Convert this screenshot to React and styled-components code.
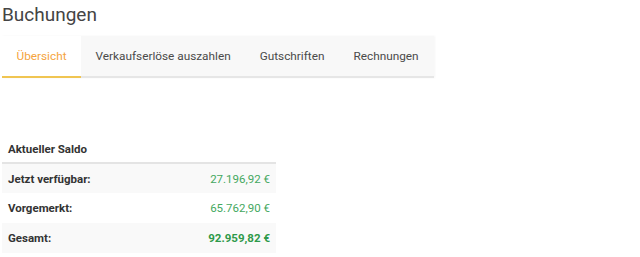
import { styled, createGlobalStyle } from 'styled-components';

const GlobalStyle = createGlobalStyle`
	body {
		margin: 0;
		background: #fff;
		font-family: Roboto, 'Liberation Sans', sans-serif;
	}
`;

const tabs = ['Übersicht', 'Verkaufserlöse auszahlen', 'Gutschriften', 'Rechnungen'];

const rows = [
	{ label: 'Jetzt verfügbar:', value: '27.196,92 €' },
	{ label: 'Vorgemerkt:', value: '65.762,90 €' },
	{ label: 'Gesamt:', value: '92.959,82 €', total: true },
];

function App() {
	return (
		<Page>
			<GlobalStyle />
			<Title>Buchungen</Title>
			<TabBar>
				{tabs.map((tab, i) => (
					<Tab key={tab} data-active={i === 0}>
						{tab}
					</Tab>
				))}
			</TabBar>
			<Table>
				<thead>
					<tr>
						<HeadCell colSpan={2}>Aktueller Saldo</HeadCell>
					</tr>
				</thead>
				<tbody>
					{rows.map((row, i) => (
						<Row key={row.label} $striped={i % 2 === 0}>
							<Label>{row.label}</Label>
							<Value $total={row.total}>{row.value}</Value>
						</Row>
					))}
				</tbody>
			</Table>
		</Page>
	);
}

export default App;

const Page = styled.div`
	padding: 0 2px;
`;

const Title = styled.h1`
	margin: 0;
	padding-top: 3px;
	height: 33px;
	color: #444;
	font-size: 19px;
	font-weight: 400;
	line-height: 24px;
`;

const TabBar = styled.div`
	display: flex;
	width: fit-content;
	padding-right: 1px;
	background: #f8f8f8;
	border-bottom: 2px solid #e6e6e6;
	box-shadow: 1px 0 2px rgba(0, 0, 0, 0.04);
`;

const Tab = styled.div`
	padding: 0 14.5px;
	height: 40px;
	display: flex;
	align-items: center;
	white-space: nowrap;
	color: #4a4a4a;
	font-size: 11.8px;
	margin-bottom: -2px;
	border-bottom: 2px solid transparent;

	&[data-active='true'] {
		background: #fff;
		color: #f5a440;
		border-bottom-color: #f0c552;
	}
`;

const Table = styled.table`
	margin-top: 57px;
	width: 274px;
	border-collapse: collapse;
	font-size: 11.5px;
	color: #333;
`;

const HeadCell = styled.th`
	text-align: left;
	font-weight: 700;
	padding: 0 6px;
	height: 27px;
	border-bottom: 2px solid #e4e4e4;
`;

const Row = styled.tr`
	background: ${(p) => (p.$striped ? '#f9f9f9' : '#fff')};
	height: 30px;
`;

const Label = styled.td`
	padding: 0 6px;
	font-weight: 700;
`;

const Value = styled.td`
	padding: 0 6px;
	text-align: right;
	color: ${(p) => (p.$total ? '#2e9a4a' : '#44a860')};
	font-weight: ${(p) => (p.$total ? 700 : 400)};
`;
